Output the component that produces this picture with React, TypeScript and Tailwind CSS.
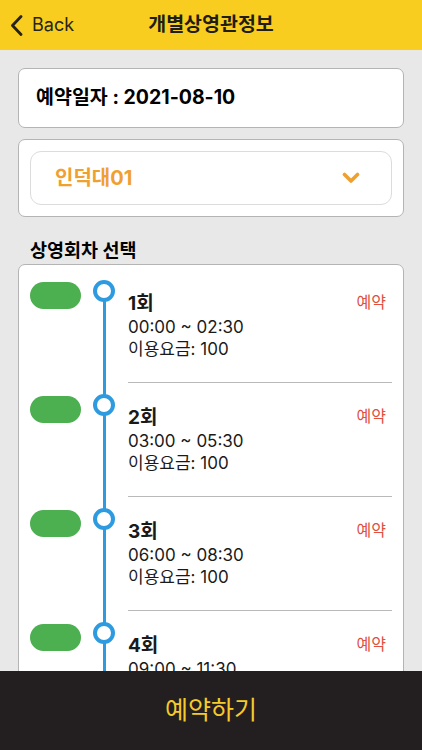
import React from "react";

const font = { fontFamily: '"Inter", "Noto Sans CJK KR", sans-serif' };

const rows = [
  { n: "1회", t: "00:00 ~ 02:30" },
  { n: "2회", t: "03:00 ~ 05:30" },
  { n: "3회", t: "06:00 ~ 08:30" },
  { n: "4회", t: "09:00 ~ 11:30" },
];

export default function App() {
  return (
    <div className="w-[422px] h-[750px] flex flex-col overflow-hidden bg-[#e9e8e9]" style={font}>
      <div className="h-[50px] shrink-0 bg-[#f9cd1f] relative flex items-center">
        <div className="flex items-center pl-[10px] gap-[9px] text-[#262416]">
          <svg width="13" height="21" viewBox="0 0 13 21" fill="none">
            <polyline points="11,1.5 2.5,10.5 11,19.5" stroke="#262416" strokeWidth="2.8" strokeLinecap="round" strokeLinejoin="round" />
          </svg>
          <span className="text-[18px] leading-none">Back</span>
        </div>
        <div className="absolute inset-0 flex items-center justify-center pointer-events-none">
          <span className="text-[19.5px] font-bold text-[#1f1d14]">개별상영관정보</span>
        </div>
      </div>

      <div className="flex-1 overflow-hidden px-[18px] pt-[18px] flex flex-col">
        <div className="h-[60px] bg-white rounded-[7px] border border-[#b4b4b4] flex items-center pl-[17px] shrink-0">
          <span className="text-[19.5px] font-bold text-black">예약일자 : 2021-08-10</span>
        </div>

        <div className="mt-[11px] h-[78px] bg-white rounded-[7px] border border-[#b4b4b4] px-[11px] py-[11px] shrink-0">
          <div className="h-full rounded-[11px] border border-[#dcdcdc] flex items-center justify-between pl-[24px] pr-[31px]">
            <span className="text-[20px] font-bold text-[#efa02f]">인덕대01</span>
            <svg width="18" height="12" viewBox="0 0 18 12" fill="none">
              <polyline points="2.5,2.5 9,9 15.5,2.5" stroke="#efa02f" strokeWidth="3.6" strokeLinecap="round" strokeLinejoin="round" />
            </svg>
          </div>
        </div>

        <div className="mt-[21px] pl-[12px] text-[18.5px] font-bold text-black leading-[24px] shrink-0">상영회차 선택</div>

        <div className="mt-[2px] bg-white rounded-t-[7px] border border-[#b4b4b4] pt-[4px] flex-1 shrink-0">
          {rows.map((r, i) => (
            <div key={i} className="flex h-[114px]">
              <div className="pl-[11px] pt-[13px]">
                <div className="w-[51px] h-[27px] rounded-full bg-[#4caf50]" />
              </div>
              <div className="relative w-[22px] ml-[12px]">
                <div className={`absolute left-[9.5px] w-[3px] bg-[#2e9be0] bottom-0 ${i === 0 ? "top-[12px]" : "top-0"}`} />
                <div className="relative mt-[11px] w-[22px] h-[22px] rounded-full border-[4px] border-[#2e9be0] bg-white" />
              </div>
              <div className="ml-[13px] flex-1 mr-[11px] flex flex-col">
                <div className="flex-1 flex justify-between pt-[24px]">
                  <div className="text-[17px] leading-[22.5px] text-[#1a1a1a]">
                    <div className="font-bold text-[19px]">{r.n}</div>
                    <div>{r.t}</div>
                    <div>이용요금: 100</div>
                  </div>
                  <div className="text-[16px] text-[#e0503f] mt-[-3px] mr-[6px]">예약</div>
                </div>
                <div className="h-px bg-[#b9b9b9]" />
              </div>
            </div>
          ))}
        </div>
      </div>

      <div className="h-[79px] shrink-0 bg-[#231f20] flex items-center justify-center">
        <span className="text-[25px] text-[#f5cb2b]">예약하기</span>
      </div>
    </div>
  );
}
